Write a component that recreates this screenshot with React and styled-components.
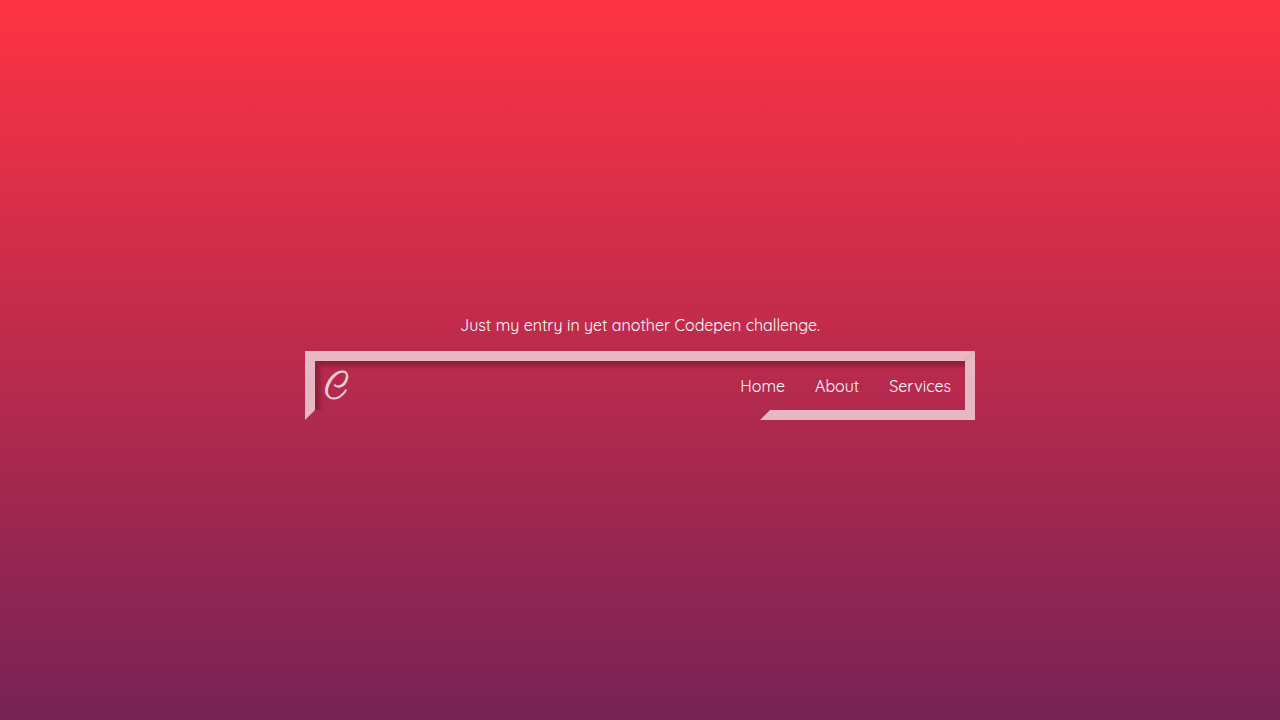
import styled, { createGlobalStyle } from 'styled-components';

const GlobalStyle = createGlobalStyle`
  * {
    box-sizing: border-box;
  }
  body {
    margin: 0;
    font-family: Quicksand, Lato, sans-serif;
    font-size: 16px;
    line-height: 20px;
    color: #fff;
  }
`;

const Page = styled.main`
  min-height: 100vh;
  display: flex;
  flex-direction: column;
  align-items: center;
  justify-content: center;
  padding: 0 20px;
  background: linear-gradient(#ff3344, #772255);
`;

const Intro = styled.p`
  margin: 15px 0 16px;
`;

const Header = styled.header`
  position: relative;
  width: 100%;
  max-width: 670px;
  display: flex;
  align-items: center;
  justify-content: space-between;
  border: 10px solid transparent;
  border-top-color: #fffa;
  border-left-color: #fffa;
  box-shadow: inset 5px 5px 5px rgba(0, 0, 0, 0.25);

  /* second half of the frame, laid over the first so the corners meet */
  &::after {
    content: "";
    position: absolute;
    top: -10px;
    right: -10px;
    bottom: -10px;
    width: 30%;
    border: 10px solid transparent;
    border-right-color: #fffa;
    border-bottom-color: #fffa;
    pointer-events: none;
  }
`;

const Logo = styled.a`
  padding: 6px 0 0 10px;
  font-family: Parisienne, cursive;
  font-size: 32px;
  font-weight: 700;
  line-height: 43px;
  color: #fffc;
  text-decoration: none;
`;

const Nav = styled.nav`
  display: flex;
  gap: 30px;
  padding-right: 14px;
`;

const NavLink = styled.a`
  color: #fff;
  text-decoration: none;
`;

const links = ['Home', 'About', 'Services'];

export default function App() {
  return (
    <>
      <GlobalStyle />
      <Page>
        <Intro>Just my entry in yet another Codepen challenge.</Intro>
        <Header>
          <Logo href="#">C</Logo>
          <Nav>
            {links.map((link) => (
              <NavLink key={link} href={`#${link.toLowerCase()}`}>
                {link}
              </NavLink>
            ))}
          </Nav>
        </Header>
      </Page>
    </>
  );
}
